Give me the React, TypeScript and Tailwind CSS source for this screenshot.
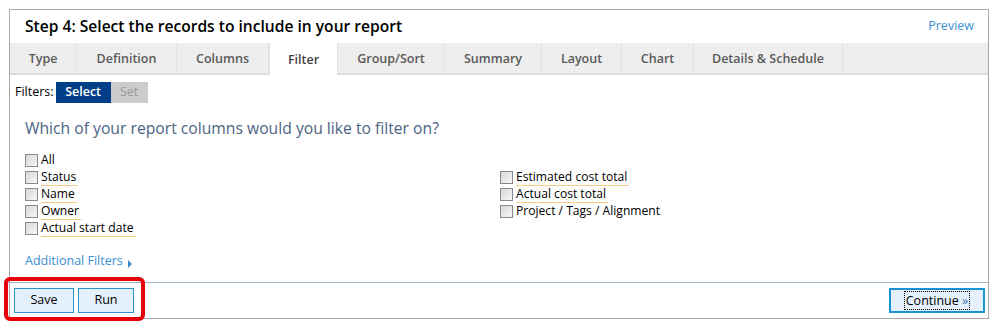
import React from "react";

const TABS = [
  { label: "Type", w: "w-[67px]" },
  { label: "Definition", w: "w-[100px]" },
  { label: "Columns", w: "w-[92px]" },
  { label: "Filter", w: "w-[69px]", active: true },
  { label: "Group/Sort", w: "w-[107px]" },
  { label: "Summary", w: "w-[97px]" },
  { label: "Layout", w: "w-[80px]" },
  { label: "Chart", w: "w-[72px]" },
  { label: "Details & Schedule", w: "w-[149px]" },
];

function Check({ label, line = true }: { label: string; line?: boolean }) {
  return (
    <div className="flex h-[17px] items-center">
      <span className="mr-[3px] inline-block h-[13px] w-[13px] shrink-0 border border-[#8a8a8a] bg-gradient-to-br from-[#d8d8d8] to-[#f7f7f7]" />
      <span
        className={
          "pr-[2px] leading-[16px] text-[12.1px] text-black " +
          (line ? "border-b border-[#f9cb80]" : "border-b border-transparent")
        }
      >
        {label}
      </span>
    </div>
  );
}

export default function App() {
  return (
    <div className="relative h-[326px] w-[1003px] bg-white font-['Open_Sans',sans-serif]">
      <div className="ml-[9px] pt-[9px]">
        <div className="flex h-[310px] w-[980px] flex-col border border-[#aaaaaa]">
          {/* header */}
          <div className="flex h-[33px] items-center justify-between pl-[15px] pr-[14px]">
            <h1 className="text-[15.6px] font-semibold text-black">
              Step 4: Select the records to include in your report
            </h1>
            <a className="text-[12.5px] text-[#3a8fd3]">Preview</a>
          </div>

          {/* tabs */}
          <div className="flex h-[32px] border-b-2 border-[#dddddd] bg-[#eeeeee]">
            {TABS.map((t) => (
              <div
                key={t.label}
                className={
                  t.w +
                  " -mb-[2px] flex items-center justify-center text-[12.5px] font-semibold " +
                  (t.active
                    ? "border-x border-[#e2e2e2] bg-white pt-[2px] text-[#444]"
                    : "border-r border-[#e2e2e2] text-[#5a5a5a]")
                }
              >
                {t.label}
              </div>
            ))}
          </div>

          {/* body */}
          <div className="flex-1">
            <div className="mt-[7px] flex h-[21px] items-center pl-[5px] text-[12.5px]">
              <span className="mr-[2px] text-black">Filters:</span>
              <span className="flex h-[21px] w-[55px] items-center justify-center bg-[#003f87] font-semibold text-white">
                Select
              </span>
              <span className="flex h-[21px] w-[37px] items-center justify-center bg-[#cccccc] text-[#9a9a9a]">
                Set
              </span>
            </div>

            <p className="mt-[13px] pl-[15px] text-[15.7px] leading-[24px] text-[#4c6483]">
              Which of your report columns would you like to filter on?
            </p>

            <div className="mt-[12px] flex pl-[15px]">
              <div className="w-[475px]">
                <Check label="All" line={false} />
                <Check label="Status" />
                <Check label="Name" />
                <Check label="Owner" />
                <Check label="Actual start date" />
              </div>
              <div className="pt-[17px]">
                <Check label="Estimated cost total" />
                <Check label="Actual cost total" />
                <Check label="Project / Tags / Alignment" line={false} />
              </div>
            </div>

            <div className="mt-[15px] flex items-center pl-[15px] text-[12.5px] text-[#3a8fd3]">
              Additional Filters
              <svg width="6" height="8" viewBox="0 0 6 8" className="ml-[4px] mt-[6px]">
                <path d="M1 0 L5 4 L1 8 Z" fill="#3a8fd3" />
              </svg>
            </div>
          </div>

          {/* footer */}
          <div className="flex h-[36px] items-center justify-between border-t border-[#9fb4c8] pl-[4px] pr-[3px]">
            <div className="flex gap-[4px]">
              <button className="h-[25px] w-[60px] border border-[#2b95c8] bg-[#e4f0fb] text-[12.5px] text-black">
                Save
              </button>
              <button className="h-[25px] w-[56px] border border-[#2b95c8] bg-[#e4f0fb] text-[12.5px] text-black">
                Run
              </button>
            </div>
            <button className="flex h-[25px] w-[96px] items-center justify-center border-2 border-[#1b93cf] bg-[#e4f0fb] text-[12.5px] text-black">
              <span className="border border-dotted border-black px-[1px] leading-[17px]">
                Continue <span className="text-[#3a6fb0]">»</span>
              </span>
            </button>
          </div>
        </div>
      </div>

      {/* highlight annotation */}
      <div className="pointer-events-none absolute left-[4px] top-[277px] h-[44px] w-[141px] rounded-[6px] border-[4px] border-[#e8000b]" />
    </div>
  );
}
